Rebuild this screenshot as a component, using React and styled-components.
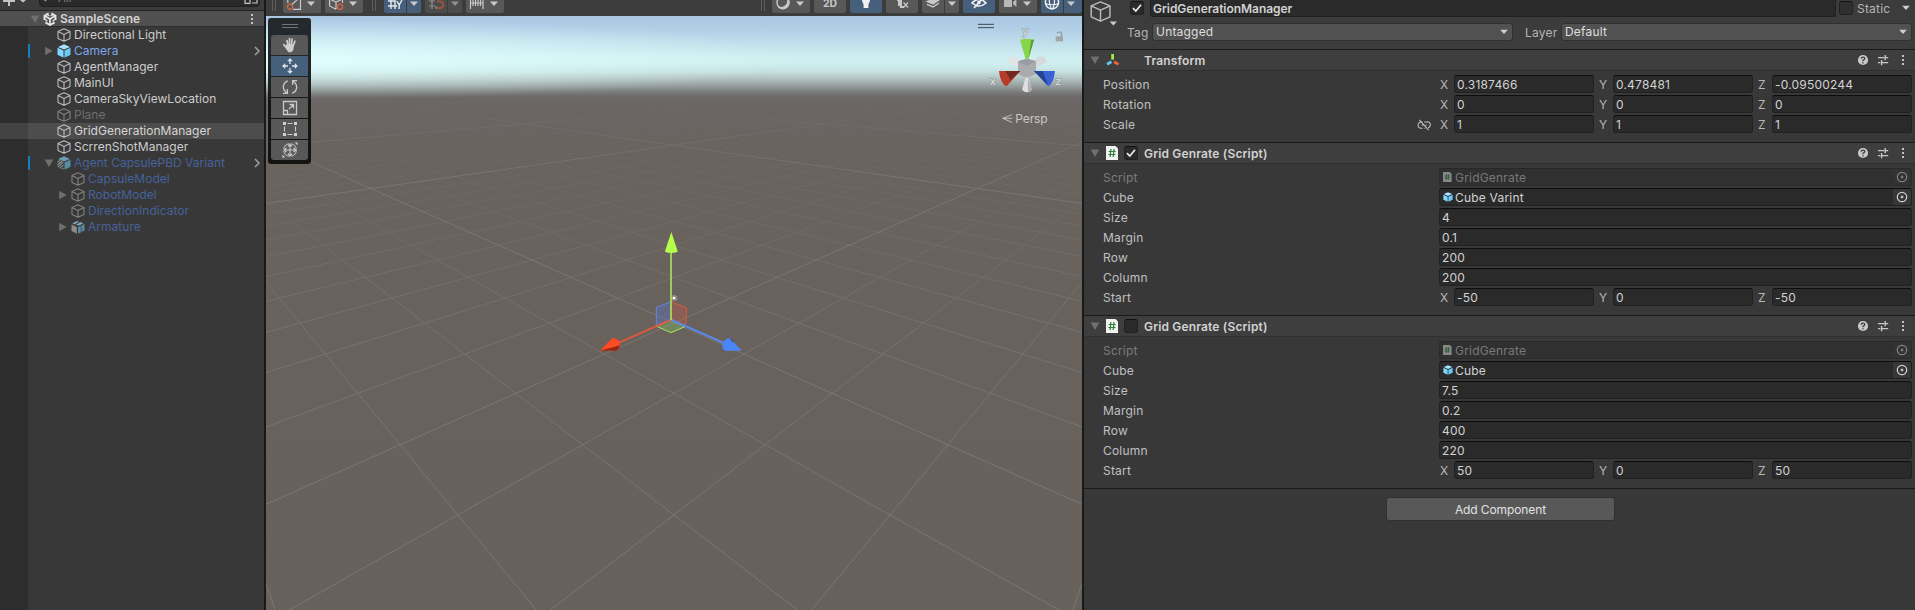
import React from "react";
import styled, { createGlobalStyle, css } from "styled-components";

const Global = createGlobalStyle`
  * { box-sizing: border-box; }
  html, body { margin: 0; background: #383838; overflow: hidden; }
  body {
    font-family: Inter, "Liberation Sans", sans-serif;
    font-size: 12px;
    color: #c4c4c4;
  }
  svg { display: block; flex: none; }
`;

const Editor = styled.div`
  display: flex;
  width: 1915px;
  height: 610px;
  overflow: hidden;
  background: #191919;
  gap: 2px;
`;

/* ---------- Hierarchy ---------- */

const Hierarchy = styled.aside`
  width: 264px;
  display: flex;
  flex-direction: column;
  background: linear-gradient(to right, #2d2d2d 28px, #383838 28px);
`;

const SearchBar = styled.div`
  height: 11px;
  display: flex;
  align-items: flex-end;
  background: #3c3c3c;
  border-bottom: 1px solid #232323;
  overflow: hidden;
`;

const SearchField = styled.div`
  flex: 1;
  margin: 0 4px 3px 13px;
  height: 20px;
  display: flex;
  align-items: center;
  border: 1px solid #202020;
  border-radius: 4px;
  background: #2a2a2a;
  color: #7a7a7a;
  font-size: 11.5px;
  padding: 3px 1px 0 4px;
  gap: 5px;

  span { flex: 1; padding-bottom: 1px; }
`;

const TreeRow = styled.div`
  height: 16px;
  display: flex;
  align-items: center;
  padding-left: ${(p) => 28 + p.$depth * 14}px;
  padding-right: ${(p) => (p.$scene ? 5 : 3)}px;
  letter-spacing: ${(p) => (p.$scene ? "0.06px" : "0.02px")};
  font-weight: ${(p) => (p.$scene ? 600 : 400)};
  color: ${(p) => p.$color};
  ${(p) => p.$scene && css`background: #505050; border-bottom: 1px solid #2c2c2c;`}
  ${(p) => p.$selected && css`background: linear-gradient(to right, #434343 28px, #4d4d4d 28px);`}
  ${(p) => p.$override && css`
    background: linear-gradient(#0f81be, #0f81be) 28px 1px / 2px 14px no-repeat;
  `}
`;

const ArrowSlot = styled.span`
  width: 15px;
  display: flex;
  padding-left: 2px;
`;

const TreeLabel = styled.span`
  flex: 1;
  margin-left: 3px;
  line-height: 16px;
  white-space: nowrap;
`;

const Fold = ({ open, size = 10 }) => (
  <svg width={size} height={size} viewBox="0 0 10 10">
    <path d={open ? "M0.6 1.4H9.4L5 9Z" : "M1.2 0.8V9.2L8.6 5Z"} fill="#6f6f6f" />
  </svg>
);

const OutlineCube = ({ size = 14, color = "#bdbdbd", width = 1.1 }) => (
  <svg width={size} height={size} viewBox="0 0 14 14" fill="none" stroke={color} strokeWidth={width} strokeLinejoin="round">
    <path d="M7 .8L13 3.5V10.4L7 13.3L1 10.4V3.5ZM1 3.5L7 6.4L13 3.5M7 6.4V13.3" />
  </svg>
);

const SolidCube = ({ size = 14 }) => (
  <svg width={size} height={size} viewBox="0 0 14 14">
    <path d="M7 .3L13 2.9L7 5.6L1 2.9Z" fill="#a5e2ff" />
    <path d="M.5 3.8L6.5 6.5V13.7L.5 10.8Z" fill="#7fd6fd" />
    <path d="M13.5 3.8L7.5 6.5V13.7L13.5 10.8Z" fill="#6cc9f3" />
  </svg>
);

const VariantCube = () => (
  <svg width="14" height="14" viewBox="0 0 14 14">
    <path d="M7 .3L13 2.9L7 5.6L1 2.9Z" fill="#6c9db3" />
    <path d="M13.5 3.8L7.5 6.5V13.7L13.5 10.8Z" fill="#578ca3" />
    <path d="M.5 6.4L3 4.2M.5 9L5 5M.7 11.2L6.4 6.2M2.6 12.3L6.5 8.8M5 13.2L6.5 11.8" stroke="#8f9496" strokeWidth="1.1" />
  </svg>
);

const ModelCube = () => (
  <svg width="14" height="14" viewBox="0 0 14 14">
    <path d="M.5 4.5L5.8 6.9V13.7L.5 11Z" fill="#8b8b8b" />
    <path d="M1.3 3.4L5.8 .9L8 1.8L3.6 4.4ZM9.3 2L12.5 3.3L8.2 5.6L4.9 5Z" fill="#7ba5b7" />
    <path d="M13.5 4L7 7.2V13.7L13.5 10.6Z" fill="#578ca3" />
    <path d="M10.2 5.6V12" stroke="#383838" strokeWidth=".7" />
  </svg>
);

const UnityLogo = () => (
  <svg width="14" height="14" viewBox="0 0 14 14" fill="none" stroke="#e6e6e6">
    <path d="M7 7V12.6M7 7L2 4.1M7 7L12 4.1" strokeWidth="1.7" />
    <path d="M5.6 1.4L1.5 3.8V8M8.4 1.4L12.5 3.8V8M2.4 10.4L7 13L11.6 10.4" strokeWidth="1.9" />
    <path d="M4.2 2.8L6.4 4M9.8 2.8L7.6 4M1.8 7.2L4.4 9.2M12.2 7.2L9.6 9.2" strokeWidth="1.2" />
  </svg>
);

const Kebab = () => (
  <svg width="14" height="14" viewBox="0 0 14 14" fill="#c4c4c4">
    <rect x="6" y="2" width="2" height="2" /><rect x="6" y="6" width="2" height="2" /><rect x="6" y="10" width="2" height="2" />
  </svg>
);

const Chevron = () => (
  <svg width="10" height="10" viewBox="0 0 10 10" fill="none" stroke="#a0a0a0" strokeWidth="1.5">
    <path d="M4 1L8 5L4 9" />
  </svg>
);

const WHITE = "#cdcdcd";
const BLUE = "#7da7ea";
const DIM_BLUE = "#46629a";

const treeItems = [
  { name: "Directional Light", icon: "cube", color: WHITE, depth: 1 },
  { name: "Camera", icon: "prefab", color: BLUE, depth: 1, fold: "closed", prefab: true },
  { name: "AgentManager", icon: "cube", color: WHITE, depth: 1 },
  { name: "MainUI", icon: "cube", color: WHITE, depth: 1 },
  { name: "CameraSkyViewLocation", icon: "cube", color: WHITE, depth: 1 },
  { name: "Plane", icon: "dim", color: "#6e6e6e", depth: 1 },
  { name: "GridGenerationManager", icon: "cube", color: "#d6d6d6", depth: 1, selected: true },
  { name: "ScrrenShotManager", icon: "cube", color: WHITE, depth: 1 },
  { name: "Agent CapsulePBD Variant", icon: "variant", color: DIM_BLUE, depth: 1, fold: "open", prefab: true },
  { name: "CapsuleModel", icon: "dim", color: DIM_BLUE, depth: 2 },
  { name: "RobotModel", icon: "dim", color: DIM_BLUE, depth: 2, fold: "closed" },
  { name: "DirectionIndicator", icon: "dim", color: DIM_BLUE, depth: 2 },
  { name: "Armature", icon: "model", color: DIM_BLUE, depth: 2, fold: "closed" },
];

const treeIcons = {
  cube: <OutlineCube />,
  dim: <OutlineCube color="#808080" />,
  prefab: <SolidCube />,
  variant: <VariantCube />,
  model: <ModelCube />,
};

const HierarchyPanel = () => (
  <Hierarchy>
    <SearchBar>
      <svg width="26" height="10" viewBox="0 0 26 10">
        <path d="M3 1H15M9 0V6" stroke="#c4c4c4" strokeWidth="2" />
        <path d="M20 0H26L23 2.6Z" fill="#c4c4c4" />
      </svg>
      <SearchField>
        <svg width="9" height="10" viewBox="0 0 9 10" fill="none" stroke="#b0b0b0" strokeWidth="1.4">
          <circle cx="5" cy="2.2" r="2.6" /><path d="M3.4 4.2L.8 7" />
        </svg>
        <span>All</span>
        <svg width="14" height="14" viewBox="0 0 14 14" fill="none" stroke="#c4c4c4" strokeWidth="1.2">
          <path d="M1 7H6V11.4H1ZM4 5V1H13V11H8M8 5L11 2" />
        </svg>
      </SearchField>
    </SearchBar>
    <TreeRow $depth={0} $scene $color="#d4d4d4">
      <ArrowSlot><Fold open /></ArrowSlot>
      <UnityLogo />
      <TreeLabel>SampleScene</TreeLabel>
      <Kebab />
    </TreeRow>
    {treeItems.map((t) => (
      <TreeRow key={t.name} $depth={t.depth} $color={t.color} $selected={t.selected} $override={t.prefab}>
        <ArrowSlot>{t.fold && <Fold open={t.fold === "open"} />}</ArrowSlot>
        {treeIcons[t.icon]}
        <TreeLabel>{t.name}</TreeLabel>
        {t.prefab && <Chevron />}
      </TreeRow>
    ))}
  </Hierarchy>
);

/* ---------- Scene ---------- */

const SceneColumn = styled.main`
  width: 816px;
  display: flex;
  flex-direction: column;
`;

const Toolbar = styled.div`
  height: 16px;
  display: flex;
  align-items: flex-end;
  padding: 0 0 3px 6px;
  background: #3c3c3c;
  overflow: hidden;
`;

const ToolGroup = styled.div`
  display: flex;
  gap: 1px;
  margin-right: ${(p) => p.$after ?? 4}px;
  opacity: ${(p) => (p.$dim ? 0.6 : 1)};
  border-radius: 2px;
  overflow: hidden;
  flex: none;
`;

const ToolButton = styled.div`
  width: ${(p) => p.$w}px;
  height: 20px;
  background: ${(p) => (p.$active ? "#46607c" : "#585858")};
  color: #c9c9c9;
`;

const Grip = styled.div`
  width: 4px;
  height: 18px;
  margin: 0 ${(p) => p.$after}px 2px 0;
  border-left: 1px solid #5e5e5e;
  border-right: 1px solid #5e5e5e;
  flex: none;
`;

const Spacer = styled.div`
  flex: 1;
`;

const Tool = ({ w, active, arrow, children }) => (
  <ToolButton $w={w} $active={active}>
    <svg width={w} height="20" viewBox={`0 -7 ${w} 20`} fill="none" stroke="currentColor" strokeWidth="1.2">
      {children}
      {arrow && <path d={`M${arrow - 4} 1.5H${arrow + 4}L${arrow} 6Z`} fill="currentColor" stroke="none" />}
    </svg>
  </ToolButton>
);

const SceneToolbar = () => (
  <Toolbar>
    <Grip $after={7} />
    <ToolGroup>
      <Tool w={38} arrow={28}>
        <path d="M4.8 3V-5H17.5V9.4H10M9 4.5L16 -2" />
        <circle cx="7" cy="6.7" r="2.6" stroke="#e0633f" strokeWidth="1.3" />
      </Tool>
    </ToolGroup>
    <ToolGroup $after={9}>
      <Tool w={38} arrow={28}>
        <path d="M11 9.2L4.6 6V-2L11 -5L17.5 -2V3M4.6 -1L11 2L17.5 -1M11 2V9" />
        <circle cx="15" cy="6.7" r="2.6" stroke="#e0633f" strokeWidth="1.3" />
      </Tool>
    </ToolGroup>
    <Grip $after={8} />
    <ToolGroup>
      <Tool w={22} active>
        <path d="M7 -5V9M11 -5V9M4 1H11M4 6H13M12.8 1L15.2 5L18 0M15.2 5V9" stroke="#e8e8e8" strokeWidth="1.4" />
      </Tool>
      <Tool w={14} active arrow={7} />
    </ToolGroup>
    <ToolGroup $dim>
      <Tool w={22}>
        <path d="M7 -5V9M11 -3V0M11 6V9M4 1H10M4 6H10" />
        <path d="M12 1.5H15A2.4 2.4 0 0 1 15 8H12" stroke="#e0633f" strokeWidth="2" />
      </Tool>
      <Tool w={14} arrow={7} />
    </ToolGroup>
    <ToolGroup>
      <Tool w={38} arrow={28}>
        <path d="M4.5 -2V9M17 -2V9M7 0V6M9.5 0V6M12 0V6M14.5 0V6M4 3H17" />
      </Tool>
    </ToolGroup>
    <Spacer />
    <Grip $after={7} />
    <ToolGroup>
      <Tool w={38} arrow={28}>
        <circle cx="11" cy="2.6" r="6" strokeWidth="1.4" />
        <path d="M15.5 -1A6 6 0 0 1 6 6.5A6.5 6.5 0 0 0 15.5 -1Z" fill="currentColor" />
      </Tool>
    </ToolGroup>
    <ToolGroup>
      <Tool w={32}>
        <text x="16" y="7.4" textAnchor="middle" fontSize="10.4" fontWeight="700" fill="currentColor" stroke="none">2D</text>
      </Tool>
    </ToolGroup>
    <ToolGroup>
      <Tool w={32} active>
        <path d="M12 0A4 4 0 0 1 20 0C20 2.4 18.4 3 18.4 5V8H13.6V5C13.6 3 12 2.4 12 0Z" fill="#f2f2f2" stroke="none" />
      </Tool>
    </ToolGroup>
    <ToolGroup>
      <Tool w={32}>
        <path d="M11 0H13V6M15 -2V7H18" strokeWidth="2" /><path d="M17.5 2.5L22 7.5M22 2.5L17.5 7.5" />
      </Tool>
    </ToolGroup>
    <ToolGroup>
      <Tool w={22}>
        <path d="M5 1.5L11 4L17 0L13 -1.5Z" fill="currentColor" />
        <path d="M5 4.4L11 7L17 3" strokeWidth="1.5" />
      </Tool>
      <Tool w={14} arrow={7} />
    </ToolGroup>
    <ToolGroup>
      <Tool w={32} active>
        <path d="M9 3Q16 -4 23 3Q16 9 9 3ZM11 8L21 -3" stroke="#f0f0f0" strokeWidth="1.6" />
        <circle cx="16" cy="2.6" r="1.8" fill="#f0f0f0" stroke="none" />
      </Tool>
    </ToolGroup>
    <ToolGroup>
      <Tool w={38} arrow={28}>
        <path d="M5 -3H13V7H5ZM14 2L17.4 -1V7L14 4Z" fill="currentColor" stroke="none" opacity=".85" />
      </Tool>
    </ToolGroup>
    <ToolGroup $after={0}>
      <Tool w={22} active>
        <g stroke="#f0f0f0"><circle cx="11" cy="2.3" r="6.6" strokeWidth="1.5" /><path d="M4.5 3.5Q11 6 17.5 3.5M9 -4Q7 3 10.5 9M12.5 -4Q15 3 11.5 9" /></g>
      </Tool>
      <Tool w={18} active arrow={7} />
    </ToolGroup>
  </Toolbar>
);

const Viewport = styled.div`
  flex: 1;
  position: relative;
  overflow: hidden;
  background:
    radial-gradient(ellipse 480px 40px at 50px 43px, rgba(228, 255, 255, 0.85), rgba(225, 255, 255, 0.45) 50%, rgba(225, 255, 255, 0)),
    linear-gradient(
      to bottom,
      #a9c6e2 0, #b2d0e7 14px, #c1e0ec 28px, #cff0f1 42px, #cfeeee 48px,
      #c6dfdf 56px, #b0c0bf 63px, #959e9d 70px, #7a7c7b 76px, #6d6968 81px,
      #6b6665 90px, #6a6462 110px, #69625d 150px, #68605b 594px
    );
`;

const SceneCanvas = styled.svg`
  position: absolute;
  inset: 0;
`;

/* Perspective of the ground grid: depth grows with (i + j), sideways offset with (i - j). */
const project = (i, j) => {
  const w = 1 + 0.183 * (4 + i + j);
  return [674 + ((i - j) * 108) / w, 61.1 + 453.8 / w];
};

const gridLines = (() => {
  const out = [];
  for (let n = -40; n <= 60; n += 1) {
    const near = -n - 8.4;
    const far = 220;
    const [ax, ay] = project(n, near);
    const [bx, by] = project(n, far);
    out.push({ n, major: n % 10 === 0, a: [ax, ay], b: [bx, by] });
    out.push({ n, major: n % 10 === 0, a: [1348 - ax, ay], b: [1348 - bx, by] });
  }
  return out;
})();

const GroundGrid = ({ major }) => (
  <g mask={major ? "url(#fadeMajor)" : "url(#fadeMinor)"} stroke="#8f9590" strokeWidth="1">
    {gridLines.filter((l) => l.major === major).map((l, k) => (
      <line key={k} x1={l.a[0]} y1={l.a[1]} x2={l.b[0]} y2={l.b[1]} />
    ))}
  </g>
);

const MoveGizmo = () => (
  <g transform="translate(580 220) scale(.33333)">
    <path d="M229 263L273 245V299L229 317Z" fill="#5f73c8" fillOpacity=".4" stroke="#6187e8" strokeWidth="3" />
    <path d="M273 245L320 264L317 317L273 299Z" fill="#c85a48" fillOpacity=".35" stroke="#dc5a3e" strokeWidth="3" />
    <path d="M273 299L317 319L273 338L230 319Z" fill="#7da860" fillOpacity=".5" stroke="#a6e860" strokeWidth="3" />
    <path d="M273 299L112 370" stroke="#dc5a3e" strokeWidth="6" />
    <path d="M273 299L434 370" stroke="#5b8af0" strokeWidth="6" />
    <path d="M273 300V96" stroke="#a5e25e" strokeWidth="5" />
    <path d="M60 392L97 354Q120 355 120 375Q118 390 108 392Z" fill="#ff4a26" />
    <path d="M60 392L108 392Q118 388 120 376Z" fill="#8e2a16" />
    <path d="M486 392L449 354Q428 358 427 377Q429 392 438 392Z" fill="#4a86fa" />
    <path d="M449 354Q460 360 462 370L455 362Z" fill="#173479" />
    <path d="M274 36L293 94Q290 99 274 99Q257 99 255 94Z" fill="#b4ff4c" />
    <circle cx="283" cy="234" r="9" fill="#c8c3b8" opacity=".45" />
    <circle cx="282" cy="234" r="4" fill="#fffdf0" />
  </g>
);

const OrientationGizmo = () => (
  <g transform="translate(760 0) scale(.33333)">
    <path d="M654 73H702M654 83H702" stroke="#3f474c" strokeWidth="3" />
    <path d="M783 196Q775 201 765 197Q741 190 741 183Q744 170 760 169Q772 172 783 184Z" fill="#e1e4e6" />
    <path d="M818 196Q828 201 838 197Q860 190 860 183Q857 170 841 169Q829 172 818 184Z" fill="#d6dadc" />
    <path d="M774 184L801 176L828 184V222L801 234L774 222Z" fill="#a9abae" />
    <path d="M774 184L801 176L828 184L801 197Z" fill="#989da3" />
    <path d="M780 119Q800 114 822 119L805 178H797Z" fill="#87d64a" />
    <path d="M814 119L822 119L805 178Z" fill="#5f9a37" />
    <path d="M717 213H781L740 259Q721 252 717 213Z" fill="#b53c2a" />
    <path d="M736 213H781L752 240Z" fill="#74291f" />
    <path d="M885 213H822L864 259Q881 252 885 213Z" fill="#3862d4" />
    <path d="M822 213H848L864 256Z" fill="#24428f" />
    <path d="M796 234Q801 230 806 234L815 268Q812 277 801 277Q790 277 787 268Z" fill="#e0dfe0" />
    <path d="M804 234L815 268Q812 277 804 277Z" fill="#b1b0b1" />
    <g fill="#d3dadb" stroke="#8b9598" strokeWidth="3" paintOrder="stroke" fontSize="32" fontWeight="600" textAnchor="middle">
      <text x="796" y="104">y</text><text x="698" y="255">x</text><text x="895" y="255">z</text>
    </g>
    <rect x="887" y="109" width="22" height="15" fill="#a0a5a6" />
    <path d="M891 100Q892 96 898 96Q905 96 905 104V110" fill="none" stroke="#8f9698" strokeWidth="3.5" />
    <path d="M756 344L728 355L756 367M728 355H757" fill="none" stroke="#c2c0be" strokeWidth="3" />
    <text x="766" y="369" fontSize="36" letterSpacing="-.4" fill="#cbc8c5">Persp</text>
  </g>
);

const Palette = styled.div`
  position: absolute;
  left: 2px;
  top: 2px;
  width: 43px;
  height: 146px;
  padding: 6px 3px 4px;
  border-radius: 3px;
  background: linear-gradient(#242a2e, #1f2424 40%, #151413 60%);
  display: flex;
  flex-direction: column;
  gap: 1px;
`;

const PaletteGrip = styled.div`
  width: 16px;
  height: 4px;
  margin: 0 auto 6px;
  border-top: 1px solid #70757a;
  border-bottom: 1px solid #70757a;
`;

const PaletteButton = styled.div`
  height: 20px;
  display: flex;
  align-items: center;
  justify-content: center;
  background: ${(p) => (p.$active ? "#46607c" : "#585858")};
  &:nth-child(2) { border-radius: 3px 3px 0 0; }
  &:last-child { border-radius: 0 0 3px 3px; }
`;

const paletteIcons = [
  <g key="hand" stroke="#cfcfcf" strokeLinecap="round" strokeWidth="1.7">
    <path d="M5 3.5L6 9M7.5 1.6V8M10 2L9.5 8M12.9 4.2L11 9M1.8 7.6L5 11.5" />
    <path d="M5 8H11.4L10.8 13L9.4 14.8H6.5L4.4 11.5Z" fill="#cfcfcf" strokeWidth="1" />
  </g>,
  <g key="move" stroke="#dfe5ec" strokeWidth="1.3">
    <path d="M8 1V6M8 10V15M1 8H6M10 8H15" />
    <path d="M5.6 3L8 .4L10.4 3ZM5.6 13L8 15.6L10.4 13ZM3 5.6L.4 8L3 10.4ZM13 5.6L15.6 8L13 10.4Z" fill="#dfe5ec" strokeWidth=".4" />
  </g>,
  <path key="rotate" d="M5.8 1.8A6.4 6.4 0 0 0 3.6 12.8L5 14M1 14.4H5.4V10M10.2 14.2A6.4 6.4 0 0 0 12.4 3.2L11 2M15 1.6H10.6V6" strokeWidth="1.3" />,
  <path key="scale" d="M1.5 1.5H14.5V14.5H1.5ZM1.5 10.5H5.5V14.5M7 9L11.4 4.6M7.5 4.5H11.5V8.5" strokeWidth="1.3" />,
  <g key="rect"><path d="M2.5 5.5V10.5M13.5 5.5V10.5M5.5 2.5H10.5M5.5 13.5H10.5" strokeWidth="1.1" />
    <path d="M1 1H4V4H1ZM12 1H15V4H12ZM1 12H4V15H1ZM12 12H15V15H12Z" fill="#cfcfcf" stroke="none" /></g>,
  <g key="transform"><circle cx="8" cy="8" r="6.3" strokeDasharray="8.5 1.4" />
    <path d="M8 2.5V13.5M2.5 8H13.5M5.8 4.4L8 2.4L10.2 4.4M5.8 11.6L8 13.6L10.2 11.6M4.4 5.8L2.4 8L4.4 10.2M11.6 5.8L13.6 8L11.6 10.2" strokeWidth="1.2" />
    <path d="M12.6 .4H15.6V3.4ZM.4 12.6V15.6H3.4Z" fill="#cfcfcf" stroke="none" /></g>,
];

const ScenePanel = () => (
  <SceneColumn>
    <SceneToolbar />
    <Viewport>
      <SceneCanvas width="816" height="594" viewBox="266 16 816 594">
        <defs>
          <linearGradient id="minorFade" gradientUnits="userSpaceOnUse" x1="0" y1="0" x2="0" y2="610">
            <stop offset=".16" stopColor="#000" />
            <stop offset=".24" stopColor="#101010" />
            <stop offset=".36" stopColor="#2a2a2a" />
            <stop offset=".55" stopColor="#5a5a5a" />
            <stop offset="1" stopColor="#747474" />
          </linearGradient>
          <linearGradient id="majorFade" gradientUnits="userSpaceOnUse" x1="0" y1="0" x2="0" y2="610">
            <stop offset=".16" stopColor="#000" />
            <stop offset=".2" stopColor="#202020" />
            <stop offset=".3" stopColor="#666" />
            <stop offset="1" stopColor="#747474" />
          </linearGradient>
          <mask id="fadeMinor" maskUnits="userSpaceOnUse" x="266" y="16" width="816" height="594">
            <rect x="266" y="16" width="816" height="594" fill="url(#minorFade)" />
          </mask>
          <mask id="fadeMajor" maskUnits="userSpaceOnUse" x="266" y="16" width="816" height="594">
            <rect x="266" y="16" width="816" height="594" fill="url(#majorFade)" />
          </mask>
        </defs>
        <GroundGrid major={false} />
        <GroundGrid major />
        <MoveGizmo />
        <OrientationGizmo />
      </SceneCanvas>
      <Palette>
        <PaletteGrip />
        {paletteIcons.map((icon, k) => (
          <PaletteButton key={k} $active={k === 1}>
            <svg width="16" height="16" viewBox="0 0 16 16" fill="none" stroke="#c9c9c9">{icon}</svg>
          </PaletteButton>
        ))}
      </Palette>
    </Viewport>
  </SceneColumn>
);

/* ---------- Inspector ---------- */

const Inspector = styled.section`
  width: 831px;
  display: flex;
  flex-direction: column;
  background: #383838;
  letter-spacing: 0.2px;
`;

const ObjectHeader = styled.header`
  height: 49px;
  display: flex;
  background: #3c3c3c;
`;

const ObjectIcon = styled.div`
  width: 43px;
  padding: 1px 0 0 6px;
`;

const HeaderRows = styled.div`
  flex: 1;
  display: flex;
  flex-direction: column;
`;

const HeaderRow = styled.div`
  display: flex;
  align-items: center;
  height: ${(p) => p.$h}px;
  margin-bottom: ${(p) => p.$after ?? 0}px;
`;

const Checkbox = styled.span`
  width: 14px;
  height: 14px;
  flex: none;
  display: flex;
  align-items: center;
  justify-content: center;
  border: 1px solid #212121;
  border-top-color: #111;
  border-radius: 3px;
  background: ${(p) => (p.$faint ? "#303030" : "#2a2a2a")};
`;

const Field = styled.div`
  flex: 1;
  height: 18px;
  min-width: 0;
  display: flex;
  align-items: center;
  overflow: hidden;
  padding-left: 2px;
  line-height: 17px;
  color: ${(p) => (p.$disabled ? "#787878" : "#d2d2d2")};
  background: ${(p) => (p.$disabled ? "#303030" : "#2a2a2a")};
  border: 1px solid ${(p) => (p.$disabled ? "#2b2b2b" : "#212121")};
  border-top-color: ${(p) => (p.$disabled ? "#282828" : "#0d0d0d")};
  border-radius: 3px;
`;

const NameField = styled(Field)`
  margin: 0 3px 0 6px;
  font-weight: 600;
  letter-spacing: -0.04px;
  border-radius: 0 0 3px 3px;
`;

const Dropdown = styled.div`
  width: ${(p) => p.$w}px;
  height: 18px;
  display: flex;
  align-items: center;
  justify-content: space-between;
  padding: 0 4px 0 3px;
  border: 1px solid #303030;
  border-radius: 3px;
  background: #515151;
  color: #dedede;
  line-height: 16px;
`;

const HeadLabel = styled.span`
  width: ${(p) => p.$w}px;
  padding-left: ${(p) => p.$pad ?? 0}px;
  color: #b4b4b4;
  padding-top: 1px;
`;

const Component = styled.section`
  border-top: 1px solid #1a1a1a;
  padding-bottom: 9px;
`;

const ComponentHeader = styled.div`
  height: 21px;
  display: flex;
  align-items: center;
  padding: 0 5px 0 6px;
  background: #3e3e3e;
  border-bottom: 1px solid #303030;
`;

const ComponentIcons = styled.div`
  width: 34px;
  margin-left: 6px;
  display: flex;
  align-items: center;
  gap: 6px;
`;

const ComponentTitle = styled.h3`
  flex: 1;
  margin: 0 0 0 4px;
  padding-top: 1px;
  font-size: 12px;
  font-weight: 600;
  letter-spacing: 0.16px;
  color: #d2d2d2;
`;

const HeaderActions = styled.div`
  display: flex;
  gap: 6px;
`;

const Properties = styled.div`
  display: flex;
  flex-direction: column;
  gap: 2px;
  padding: 4px 3px 0 19px;
`;

const Property = styled.div`
  height: 18px;
  display: flex;
  align-items: center;
`;

const PropertyLabel = styled.span`
  width: 336px;
  flex: none;
  display: flex;
  align-items: center;
  justify-content: space-between;
  padding: 1px 8px 0 0;
  color: ${(p) => (p.$disabled ? "#7c7c7c" : "#c0c0c0")};
`;

const Axis = styled.span`
  width: ${(p) => (p.$first ? 15 : 19)}px;
  padding-left: ${(p) => (p.$first ? 1 : 5)}px;
  padding-top: 1px;
  flex: none;
  color: #b6b6b6;
`;

const ObjectName = styled.span`
  flex: 1;
  margin-left: 2px;
`;

const Picker = styled.span`
  width: 18px;
  height: 16px;
  display: flex;
  align-items: center;
  justify-content: center;
  background: ${(p) => (p.$disabled ? "#333" : "#373737")};
`;

const IconPad = styled.span`
  width: 11px;
  display: flex;
  justify-content: center;
`;

const Footer = styled.div`
  border-top: 1px solid #1a1a1a;
  display: flex;
  padding-left: 302px;
`;

const AddButton = styled.button`
  width: 229px;
  height: 24px;
  margin-top: 8px;
  padding: 0;
  border: 1px solid #303030;
  border-radius: 3px;
  background: #585858;
  color: #e2e2e2;
  font: inherit;
  letter-spacing: -0.1px;
`;

const Caret = () => (
  <svg width="8" height="6" viewBox="0 0 8 6"><path d="M.2 .8H7.8L4 5Z" fill="#cfcfcf" /></svg>
);

const Check = () => (
  <svg width="12" height="12" viewBox="0 0 12 12" fill="none" stroke="#ececec" strokeWidth="1.7"><path d="M2 6.2L4.8 9L10 2.8" /></svg>
);

const ScriptIcon = ({ size = 14, dim }) => (
  <svg width={size * 0.86} height={size} viewBox="0 0 12 14">
    <path d="M0 0H9.5L12 2.5V14H0Z" fill={dim ? "#858a85" : "#f2f2f2"} />
    <path d="M4.9 3L4.1 11M8 3L7.2 11M2.6 5.5H9.6M2.4 8.5H9.4" stroke={dim ? "#31553a" : "#2c8036"} strokeWidth="1.2" />
  </svg>
);

const TransformIcon = () => (
  <svg width="14" height="14" viewBox="0 0 14 14" strokeWidth="2.8" strokeLinecap="butt">
    <path d="M6.6 1V6.6" stroke="#a4e83c" /><path d="M5.4 8.7L1 11.2" stroke="#68c4f0" /><path d="M8 8.7L12.6 11.4" stroke="#f0623c" />
  </svg>
);

const Actions = () => (
  <HeaderActions>
    <svg width="14" height="14" viewBox="0 0 14 14">
      <circle cx="7" cy="7" r="5.1" fill="#c8c8c8" />
      <path d="M5.2 5.8Q5.2 4.2 7 4.2Q8.8 4.2 8.8 5.6Q8.8 6.6 7 7.3V8.2M7 9.2V10.6" fill="none" stroke="#3e3e3e" strokeWidth="1.3" />
    </svg>
    <svg width="14" height="14" viewBox="0 0 14 14" fill="none" stroke="#c8c8c8" strokeWidth="1.4">
      <path d="M2 4.6H8.2M9.2 2V7.2M9.2 4.6H12.2M2 9.6H4.4M5.6 7V12.2M5.6 9.6H12.2" />
    </svg>
    <Kebab />
  </HeaderActions>
);

const Target = ({ disabled }) => (
  <svg width="12" height="12" viewBox="0 0 12 12" fill="none" stroke={disabled ? "#808080" : "#cdcdcd"}>
    <circle cx="6" cy="6" r="4.7" strokeWidth="1.2" /><circle cx="6" cy="6" r="1" fill={disabled ? "#808080" : "#cdcdcd"} />
  </svg>
);

const UnlinkIcon = () => (
  <svg width="14" height="12" viewBox="0 0 14 13" fill="none" stroke="#bdbdbd" strokeWidth="1.2">
    <path d="M5.4 3.2H4A3 3 0 0 0 4 10H5.6M7 3.2H10A3 3 0 0 1 11.4 9.4M8.4 10H7.4M4.6 6.6H6.4M8.6 6.6H9.8M2 1L12 12" />
  </svg>
);

const VectorProperty = ({ label, values, link }) => (
  <Property>
    <PropertyLabel>{label}{link && <UnlinkIcon />}</PropertyLabel>
    {["X", "Y", "Z"].map((axis, k) => (
      <React.Fragment key={axis}>
        <Axis $first={k === 0}>{axis}</Axis>
        <Field>{values[k]}</Field>
      </React.Fragment>
    ))}
  </Property>
);

const ObjectProperty = ({ label, name, icon, disabled }) => (
  <Property>
    <PropertyLabel $disabled={disabled}>{label}</PropertyLabel>
    <Field $disabled={disabled}>
      <IconPad>{icon}</IconPad>
      <ObjectName>{name}</ObjectName>
      <Picker $disabled={disabled}><Target disabled={disabled} /></Picker>
    </Field>
  </Property>
);

const ScriptComponent = ({ enabled, cube, numbers, start }) => (
  <Component>
    <ComponentHeader>
      <Fold open />
      <ComponentIcons>
        <ScriptIcon />
        <Checkbox>{enabled && <Check />}</Checkbox>
      </ComponentIcons>
      <ComponentTitle>Grid Genrate (Script)</ComponentTitle>
      <Actions />
    </ComponentHeader>
    <Properties>
      <ObjectProperty label="Script" name="GridGenrate" disabled icon={<ScriptIcon size={10} dim />} />
      <ObjectProperty label="Cube" name={cube} icon={<SolidCube size={10} />} />
      {numbers.map(([label, value]) => (
        <Property key={label}>
          <PropertyLabel>{label}</PropertyLabel>
          <Field>{value}</Field>
        </Property>
      ))}
      <VectorProperty label="Start" values={start} />
    </Properties>
  </Component>
);

const InspectorPanel = () => (
  <Inspector>
    <ObjectHeader>
      <ObjectIcon>
        <svg width="32" height="26" viewBox="0 0 32 26" fill="none" stroke="#bdbdbd" strokeWidth="1.4" strokeLinejoin="round">
          <path d="M10.5 .8L20 4.8V15.8L10.5 20.2L1.2 15.8V4.8ZM1.2 4.8L10.5 9.2L20 4.8M10.5 9.2V20.2" />
          <path d="M19.6 20.6H27L23.3 24.4Z" fill="#c9c9c9" stroke="none" />
        </svg>
      </ObjectIcon>
      <HeaderRows>
        <HeaderRow $h={16} $after={7}>
          <HeadLabel $w={3} />
          <Checkbox><Check /></Checkbox>
          <NameField>GridGenerationManager</NameField>
          <Checkbox $faint />
          <HeadLabel $w={49} $pad={4}>Static</HeadLabel>
          <Caret />
          <HeadLabel $w={5} />
        </HeaderRow>
        <HeaderRow $h={18}>
          <HeadLabel $w={25}>Tag</HeadLabel>
          <Dropdown $w={361}>Untagged<Caret /></Dropdown>
          <HeadLabel $w={48} $pad={12}>Layer</HeadLabel>
          <Dropdown $w={351}>Default<Caret /></Dropdown>
        </HeaderRow>
      </HeaderRows>
    </ObjectHeader>
    <Component>
      <ComponentHeader>
        <Fold open />
        <ComponentIcons><TransformIcon /></ComponentIcons>
        <ComponentTitle>Transform</ComponentTitle>
        <Actions />
      </ComponentHeader>
      <Properties>
        <VectorProperty label="Position" values={["0.3187466", "0.478481", "-0.09500244"]} />
        <VectorProperty label="Rotation" values={["0", "0", "0"]} />
        <VectorProperty label="Scale" values={["1", "1", "1"]} link />
      </Properties>
    </Component>
    <ScriptComponent
      enabled
      cube="Cube Varint"
      numbers={[["Size", "4"], ["Margin", "0.1"], ["Row", "200"], ["Column", "200"]]}
      start={["-50", "0", "-50"]}
    />
    <ScriptComponent
      cube="Cube"
      numbers={[["Size", "7.5"], ["Margin", "0.2"], ["Row", "400"], ["Column", "220"]]}
      start={["50", "0", "50"]}
    />
    <Footer>
      <AddButton>Add Component</AddButton>
    </Footer>
  </Inspector>
);

export default function App() {
  return (
    <>
      <Global />
      <Editor>
        <HierarchyPanel />
        <ScenePanel />
        <InspectorPanel />
      </Editor>
    </>
  );
}
